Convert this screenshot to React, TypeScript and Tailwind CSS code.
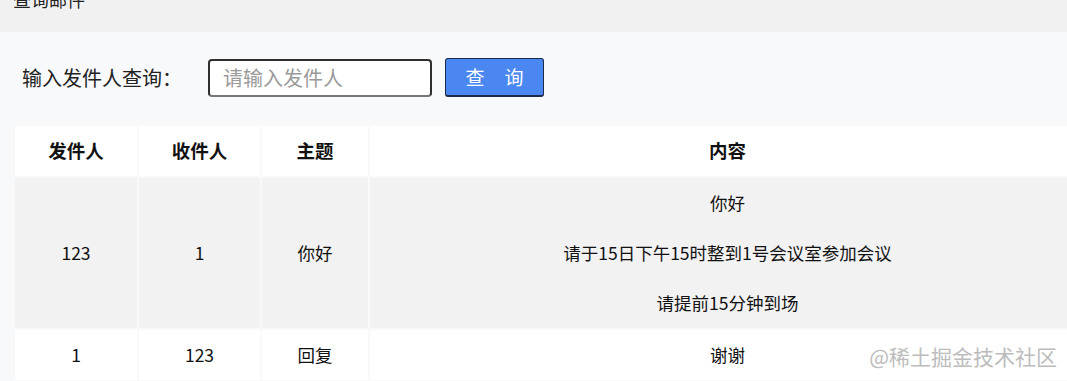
const font = { fontFamily: '"Microsoft YaHei", "Noto Sans CJK SC", "Noto Sans", sans-serif' };

interface Mail {
    from: string;
    to: string;
    subject: string;
    lines: string[];
}

const mails: Mail[] = [
    { from: "123", to: "1", subject: "你好", lines: ["你好", "请于15日下午15时整到1号会议室参加会议", "请提前15分钟到场"] },
    { from: "1", to: "123", subject: "回复", lines: ["谢谢"] },
];

const App = () => {
    return (
        <div className="relative w-full h-[381px] overflow-hidden bg-[#f8f9fb] text-[#111]" style={font}>
            {/* title bar, scrolled so the text is cut off */}
            <div className="h-8 bg-[#f1f1f1] px-[13px] overflow-hidden">
                <div className="text-[18px] leading-none -mt-[10px] text-[#222]">查询邮件</div>
            </div>

            <div className="flex items-center mt-[26px] pl-[22px]">
                <span className="text-[20px] text-[#222] w-[186px]">输入发件人查询：</span>
                <input
                    className="w-[224px] h-[38px] border-2 border-[#2f2f2f] border-b-[#777] rounded-[4px] bg-white px-[13px] text-[20px] placeholder:text-[#9a9a9a] outline-none"
                    placeholder="请输入发件人"
                />
                <button className="ml-[13px] w-[99px] h-[39px] rounded-[3px] bg-[#4a87f1] border border-[#1c2b4d] border-b-2 text-white text-[19px] flex items-center justify-center gap-[20px]">
                    <span>查</span>
                    <span>询</span>
                </button>
            </div>

            <table className="mt-[27px] ml-[13px] border-separate border-spacing-[2px] w-[1074px] text-center">
                <thead>
                    <tr className="text-[18.5px] font-bold">
                        <th className="h-[50px] w-[122px] bg-white">发件人</th>
                        <th className="h-[50px] w-[121px] bg-white">收件人</th>
                        <th className="h-[50px] w-[106px] bg-white">主题</th>
                        <th className="h-[50px] bg-white">内容</th>
                    </tr>
                </thead>
                <tbody className="text-[17.5px]">
                    {mails.map((m, i) => (
                        <tr key={i}>
                            <td className={i % 2 === 0 ? "bg-[#f2f2f2]" : "bg-white"}>{m.from}</td>
                            <td className={i % 2 === 0 ? "bg-[#f2f2f2]" : "bg-white"}>{m.to}</td>
                            <td className={i % 2 === 0 ? "bg-[#f2f2f2]" : "bg-white"}>{m.subject}</td>
                            <td className={i % 2 === 0 ? "bg-[#f2f2f2]" : "bg-white"}>
                                {m.lines.map((l, j) => (
                                    <p key={j} className="leading-[50px]">{l}</p>
                                ))}
                            </td>
                        </tr>
                    ))}
                </tbody>
            </table>

            <div className="absolute right-[10px] bottom-[14px] text-[21px] text-[#bcbcbc] leading-none">
                @稀土掘金技术社区
            </div>
        </div>
    );
};

export default App;
